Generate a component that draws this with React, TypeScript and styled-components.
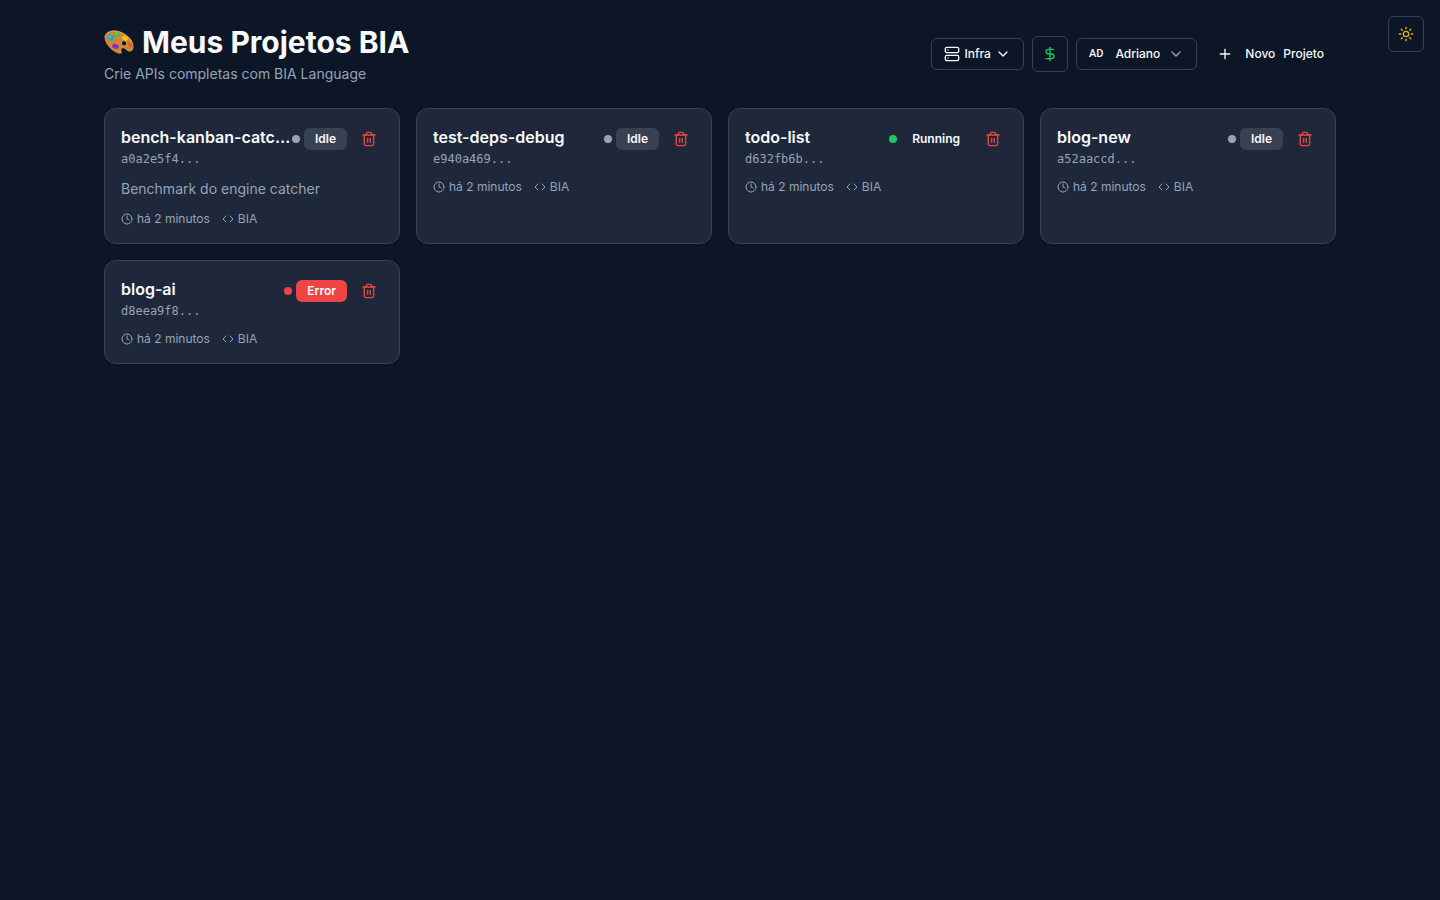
import React from "react";
import styled, { createGlobalStyle } from "styled-components";
import { ChevronDown, Clock, Code, DollarSign, Plus, Server, Sun, Trash2 } from "lucide-react";

const GlobalStyle = createGlobalStyle`
  *, *::before, *::after { box-sizing: border-box; }
  body {
    margin: 0;
    background: #0d1626;
    color: #f8fafc;
    font-family: Inter, "Liberation Sans", sans-serif;
    -webkit-font-smoothing: antialiased;
  }
  h1, h2, p { margin: 0; }
  button { font: inherit; color: inherit; cursor: pointer; }
`;

const Page = styled.div`
  min-height: 100vh;
`;

const Container = styled.main`
  max-width: 1280px;
  margin: 0 auto;
  padding: 24px;
`;

const Header = styled.header`
  display: flex;
  align-items: center;
  justify-content: space-between;
  gap: 16px;
  margin-bottom: 24px;
`;

const Title = styled.h1`
  display: flex;
  align-items: center;
  gap: 8px;
  font-size: 30px;
  line-height: 36px;
  font-weight: 700;
`;

const Subtitle = styled.p`
  margin-top: 4px;
  font-size: 14px;
  line-height: 20px;
  color: #94a3b8;
`;

const Toolbar = styled.div`
  display: flex;
  align-items: center;
  gap: 8px;
`;

const Button = styled.button<{ $gap?: number }>`
  display: inline-flex;
  align-items: center;
  gap: ${(p) => p.$gap ?? 4}px;
  height: 32px;
  padding: 0 12px;
  border: 1px solid #374151;
  border-radius: 6px;
  background: transparent;
  font-size: 12px;
  line-height: 16px;
  font-weight: 500;
  white-space: nowrap;
`;

const NewButton = styled(Button)`
  border: 0;

  svg { margin-right: 4px; }
`;

const Caret = styled(ChevronDown)`
  color: #94a3b8;
`;

const Initials = styled.span`
  margin-right: 4px;
  font-family: Roboto, sans-serif;
  font-size: 11px;
  font-weight: 500;
`;

const SquareButton = styled.button<{ $color: string }>`
  display: inline-flex;
  align-items: center;
  justify-content: center;
  width: 36px;
  height: 36px;
  padding: 0;
  border: 1px solid #374151;
  border-radius: 6px;
  background: transparent;
  color: ${(p) => p.$color};
`;

const ThemeToggle = styled(SquareButton)`
  position: fixed;
  top: 16px;
  right: 16px;
`;

const Grid = styled.section`
  display: grid;
  grid-template-columns: repeat(auto-fill, minmax(280px, 1fr));
  gap: 16px;
`;

const Card = styled.article`
  display: flex;
  flex-direction: column;
  gap: 12px;
  padding: 16px;
  border: 1px solid #374151;
  border-radius: 12px;
  background: #1e283a;
`;

const CardHead = styled.div`
  display: flex;
  align-items: flex-start;
  justify-content: space-between;
`;

const CardText = styled.div`
  flex: 1;
  min-width: 0;
`;

const CardTitle = styled.h2`
  overflow: hidden;
  font-size: 16px;
  line-height: 24px;
  font-weight: 600;
  text-overflow: ellipsis;
  white-space: nowrap;
`;

const CardId = styled.p`
  margin-top: 2px;
  font-family: "DejaVu Sans Mono", monospace;
  font-size: 12px;
  line-height: 16px;
  color: #94a3b8;
`;

const CardStatus = styled.div`
  display: flex;
  align-items: center;
  gap: 8px;
`;

type Status = "Idle" | "Running" | "Error";

const dotColor: Record<Status, string> = { Idle: "#94a3b8", Running: "#22c55e", Error: "#ef4444" };
const badgeColor: Record<Status, string> = { Idle: "#374151", Running: "transparent", Error: "#ef4444" };

const StatusGroup = styled.div`
  display: flex;
  align-items: center;
  gap: 4px;
`;

const Dot = styled.span<{ $status: Status }>`
  width: 8px;
  height: 8px;
  border-radius: 50%;
  background: ${(p) => dotColor[p.$status]};
`;

const Badge = styled.span<{ $status: Status }>`
  padding: 3px 11px;
  border-radius: 6px;
  background: ${(p) => badgeColor[p.$status]};
  font-size: 12px;
  line-height: 16px;
  font-weight: 600;
`;

const DeleteButton = styled.button`
  display: inline-flex;
  align-items: center;
  justify-content: center;
  width: 28px;
  height: 28px;
  padding: 0;
  border: 0;
  border-radius: 6px;
  background: transparent;
  color: #ef4444;
`;

const Description = styled.p`
  font-size: 14px;
  line-height: 20px;
  color: #94a3b8;
`;

const Meta = styled.div`
  display: flex;
  gap: 12px;
  font-size: 12px;
  line-height: 16px;
  color: #94a3b8;
`;

const MetaItem = styled.span`
  display: inline-flex;
  align-items: center;
  gap: 4px;
`;

interface Project {
  name: string;
  id: string;
  status: Status;
  description?: string;
}

const projects: Project[] = [
  { name: "bench-kanban-catcher", id: "a0a2e5f4", status: "Idle", description: "Benchmark do engine catcher" },
  { name: "test-deps-debug", id: "e940a469", status: "Idle" },
  { name: "todo-list", id: "d632fb6b", status: "Running" },
  { name: "blog-new", id: "a52aaccd", status: "Idle" },
  { name: "blog-ai", id: "d8eea9f8", status: "Error" },
];

function PaletteIcon() {
  return (
    <svg width="30" height="30" viewBox="0 0 30 30" aria-hidden="true">
      <path
        fill="#c98a3c"
        fillRule="evenodd"
        d="M0.5 10.5C0.5 6 5 3.2 10.5 3.4C17.5 3.7 25 8 28.2 14.2C30.4 18.6 30 23.6 26.6 24.6C24 25.3 22.6 22.8 20.4 21.6C18.4 20.6 16.8 21.6 17.4 23.4C18 25 18.4 26.2 16.6 26.6C13.6 27 8.6 24 5.2 20.2C2.2 17 0.5 13.6 0.5 10.5ZM20 14.2a2.1 2.1 0 1 0 0.1 4.2a2.1 2.1 0 1 0 -0.1 -4.2Z"
      />
      <path
        fill="none"
        stroke="#e0a656"
        strokeWidth="1"
        d="M1.2 10C1.8 6.4 5.6 4 10.5 4.1C17 4.4 24 8.4 27.4 14"
      />
      <ellipse cx="7" cy="10.5" rx="3.4" ry="2.7" transform="rotate(35 7 10.5)" fill="#2aa5b8" />
      <ellipse cx="13" cy="7.2" rx="3.2" ry="2.3" transform="rotate(25 13 7.2)" fill="#63b52f" />
      <ellipse cx="21" cy="11.3" rx="3" ry="2.2" transform="rotate(35 21 11.3)" fill="#f0c42b" />
      <ellipse cx="26" cy="18" rx="1.8" ry="3" transform="rotate(-30 26 18)" fill="#e2603c" />
      <ellipse cx="11.5" cy="19.3" rx="3.4" ry="2.5" transform="rotate(20 11.5 19.3)" fill="#8a33a8" />
      <circle cx="6.2" cy="9.8" r="1" fill="#69cfdc" />
      <circle cx="12.4" cy="6.6" r="0.9" fill="#a0dc62" />
    </svg>
  );
}

function ProjectCard({ project }: { project: Project }) {
  return (
    <Card>
      <CardHead>
        <CardText>
          <CardTitle>{project.name}</CardTitle>
          <CardId>{project.id}...</CardId>
        </CardText>
        <CardStatus>
          <StatusGroup>
            <Dot $status={project.status} />
            <Badge $status={project.status}>{project.status}</Badge>
          </StatusGroup>
          <DeleteButton type="button" aria-label={`Excluir ${project.name}`}>
            <Trash2 size={16} />
          </DeleteButton>
        </CardStatus>
      </CardHead>
      {project.description && <Description>{project.description}</Description>}
      <Meta>
        <MetaItem><Clock size={12} />há 2 minutos</MetaItem>
        <MetaItem><Code size={12} />BIA</MetaItem>
      </Meta>
    </Card>
  );
}

export default function App() {
  return (
    <Page>
      <GlobalStyle />
      <ThemeToggle type="button" $color="#eab308" aria-label="Alternar tema">
        <Sun size={16} />
      </ThemeToggle>
      <Container>
        <Header>
          <div>
            <Title>
              <PaletteIcon />
              Meus Projetos BIA
            </Title>
            <Subtitle>Crie APIs completas com BIA Language</Subtitle>
          </div>
          <Toolbar>
            <Button type="button">
              <Server size={16} />
              Infra
              <ChevronDown size={16} />
            </Button>
            <SquareButton type="button" $color="#22c55e" aria-label="Custos">
              <DollarSign size={16} />
            </SquareButton>
            <Button type="button" $gap={8}>
              <Initials>AD</Initials>
              Adriano
              <Caret size={16} />
            </Button>
            <NewButton type="button" $gap={8}>
              <Plus size={16} />
              <span>Novo</span>
              <span>Projeto</span>
            </NewButton>
          </Toolbar>
        </Header>
        <Grid>
          {projects.map((project) => (
            <ProjectCard key={project.id} project={project} />
          ))}
        </Grid>
      </Container>
    </Page>
  );
}
